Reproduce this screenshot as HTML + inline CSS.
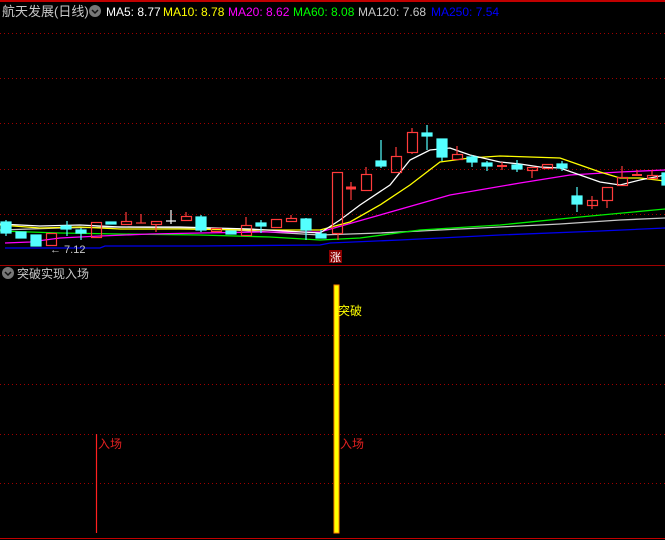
<!DOCTYPE html>
<html><head><meta charset="utf-8"><style>
body{margin:0;background:#000;width:665px;height:540px;overflow:hidden;font-family:"Liberation Sans","Noto Sans CJK SC",sans-serif}
svg{position:absolute;left:0;top:0}
</style></head><body>
<svg width="665" height="540" xmlns="http://www.w3.org/2000/svg" font-family="Liberation Sans, Noto Sans CJK SC, sans-serif">
<rect width="665" height="540" fill="#000"/>
<line x1="0" y1="1" x2="665" y2="1" stroke="#c00000" stroke-width="2"/>
<g stroke="#a00000" stroke-width="1" stroke-dasharray="1,3">
<line x1="0" y1="33.5" x2="665" y2="33.5"/><line x1="0" y1="78.5" x2="665" y2="78.5"/>
<line x1="0" y1="123.5" x2="665" y2="123.5"/><line x1="0" y1="169.5" x2="665" y2="169.5"/>
<line x1="0" y1="214.5" x2="665" y2="214.5"/>
<line x1="0" y1="335.5" x2="665" y2="335.5"/><line x1="0" y1="384.5" x2="665" y2="384.5"/>
<line x1="0" y1="434.5" x2="665" y2="434.5"/><line x1="0" y1="483.5" x2="665" y2="483.5"/>
</g>
<line x1="0" y1="265.5" x2="665" y2="265.5" stroke="#a00000"/>
<line x1="0" y1="538.5" x2="665" y2="538.5" stroke="#c00000"/>
<text x="2" y="16" font-size="13" fill="#c8c8c8">航天发展(日线)</text>
<circle cx="95" cy="11" r="6" fill="#777"/><path d="M92 10 L95 13 L98 10" stroke="#111" stroke-width="1.5" fill="none"/>
<text y="16" font-size="12"><tspan x="106" fill="#fff">MA5: 8.77</tspan><tspan x="163" fill="#ff0">MA10: 8.78</tspan><tspan x="228" fill="#f0f">MA20: 8.62</tspan><tspan x="293" fill="#0f0">MA60: 8.08</tspan><tspan x="358" fill="#c8c8c8">MA120: 7.68</tspan><tspan x="431" fill="#0000ff">MA250: 7.54</tspan></text>
<g fill="none" stroke-width="1.3">
<polyline stroke="#0000ee" points="5,248 100,248 105,246 200,246 320,245 330,243 400,240 500,235 600,231 665,228"/>
<polyline stroke="#c8c8c8" points="0,230 60,228 120,227 200,228 320,235 380,233 440,230 500,227 560,224 620,220 665,218"/>
<polyline stroke="#00ee00" points="0,231 60,233 120,234 200,235 270,237 320,240 360,238 420,230 500,225 580,217 665,209"/>
<polyline stroke="#ff00ff" points="5,243 30,242 60,238 100,236 150,234 200,233 260,232 320,232 380,215 450,195 520,183 570,175 620,172 665,170"/>
<polyline stroke="#ffff00" points="0,225 40,228 80,227 120,229 180,229 250,230 320,230 350,222 380,205 410,185 440,162 470,158 500,156 530,157 560,158 580,165 600,172 620,178 640,178 665,181"/>
<polyline stroke="#ffffff" points="0,224 40,226 80,225 120,227 180,227 250,229 320,233 340,220 360,205 390,185 410,160 430,150 450,148 470,155 500,162 520,164 540,167 560,168 580,175 600,182 620,185 640,180 665,175"/>
</g>
<g stroke-width="1.2">
<g stroke="#54ffff" fill="#54ffff">
<line x1="6" y1="220" x2="6" y2="236"/><rect x="1" y="222" width="10" height="11"/>
<rect x="16" y="232" width="10" height="6"/>
<rect x="31" y="235" width="10" height="11"/>
<line x1="67" y1="221" x2="67" y2="236"/><rect x="61" y="226" width="10" height="3"/>
<line x1="81" y1="228" x2="81" y2="240"/><rect x="76" y="230" width="10" height="3"/>
<rect x="106" y="222" width="10" height="2"/>
<line x1="201" y1="215" x2="201" y2="232"/><rect x="196" y="217" width="10" height="13"/>
<rect x="226" y="231" width="10" height="3"/>
<line x1="261" y1="220" x2="261" y2="233"/><rect x="256" y="223" width="10" height="3"/>
<line x1="306" y1="218" x2="306" y2="240"/><rect x="301" y="219" width="10" height="11"/>
<line x1="321" y1="230" x2="321" y2="238"/><rect x="316" y="234" width="10" height="4"/>
<line x1="381" y1="140" x2="381" y2="168"/><rect x="376" y="161" width="10" height="5"/>
<line x1="427" y1="125" x2="427" y2="150"/><rect x="422" y="133" width="10" height="3"/>
<line x1="442" y1="139" x2="442" y2="161"/><rect x="437" y="139" width="10" height="18"/>
<line x1="472" y1="155" x2="472" y2="167"/><rect x="467" y="157" width="10" height="5"/>
<line x1="487" y1="161" x2="487" y2="171"/><rect x="482" y="163" width="10" height="3"/>
<line x1="517" y1="160" x2="517" y2="172"/><rect x="512" y="165" width="10" height="4"/>
<line x1="562" y1="161" x2="562" y2="171"/><rect x="557" y="164" width="10" height="4"/>
<line x1="577" y1="187" x2="577" y2="212"/><rect x="572" y="196" width="10" height="8"/>
<rect x="662" y="173" width="4" height="12"/>
</g>
<g stroke="#ff3b3b" fill="none">
<rect x="46.5" y="233.5" width="10" height="12"/>
<rect x="91.5" y="222.5" width="10" height="15"/>
<line x1="126" y1="212" x2="126" y2="221"/><rect x="121.5" y="221.5" width="10" height="3"/>
<line x1="141" y1="214" x2="141" y2="223"/><line x1="136" y1="223" x2="146" y2="223"/>
<line x1="156" y1="224" x2="156" y2="232"/><rect x="151.5" y="221.5" width="10" height="3"/>
<line x1="186" y1="212" x2="186" y2="216"/><rect x="181.5" y="216.5" width="10" height="4"/>
<rect x="211.5" y="228.5" width="10" height="3"/>
<line x1="246" y1="217" x2="246" y2="225"/><rect x="241.5" y="225.5" width="10" height="10"/>
<rect x="271.5" y="219.5" width="10" height="8"/>
<line x1="291" y1="215" x2="291" y2="218"/><rect x="286.5" y="218.5" width="10" height="3"/>
<line x1="338" y1="233" x2="338" y2="240"/><rect x="332.5" y="172.5" width="10" height="61"/>
<line x1="351" y1="182" x2="351" y2="200"/><line x1="346" y1="188" x2="356" y2="188" stroke-width="3"/>
<line x1="366" y1="167" x2="366" y2="174"/><rect x="361.5" y="174.5" width="10" height="16"/>
<line x1="396" y1="147" x2="396" y2="156"/><rect x="391.5" y="156.5" width="10" height="16"/>
<line x1="412" y1="128" x2="412" y2="132"/><line x1="412" y1="152" x2="412" y2="154"/><rect x="407.5" y="132.5" width="10" height="20"/>
<line x1="457" y1="146" x2="457" y2="154"/><rect x="452.5" y="154.5" width="10" height="5"/>
<line x1="502" y1="162" x2="502" y2="170"/><line x1="497" y1="166" x2="507" y2="166" stroke-width="2"/>
<line x1="532" y1="170" x2="532" y2="178"/><rect x="527.5" y="167.5" width="10" height="3"/>
<rect x="542.5" y="164.5" width="10" height="4"/>
<line x1="592" y1="196" x2="592" y2="209"/><rect x="587.5" y="200.5" width="10" height="5"/>
<line x1="607" y1="200" x2="607" y2="208"/><rect x="602.5" y="187.5" width="10" height="13"/>
<line x1="622" y1="166" x2="622" y2="177"/><rect x="617.5" y="177.5" width="10" height="8"/>
<line x1="637" y1="170" x2="637" y2="176"/><line x1="632" y1="175" x2="642" y2="175" stroke-width="2"/>
<line x1="652" y1="170" x2="652" y2="175"/><rect x="647.5" y="175.5" width="10" height="3"/>
</g>
<g stroke="#fff"><line x1="171" y1="210" x2="171" y2="224"/><line x1="166" y1="221" x2="176" y2="221"/></g>
</g>
<text x="50" y="253" font-size="11" fill="#c8c8c8">← 7.12</text>
<rect x="329" y="250" width="13" height="13" fill="#8b0000"/>
<text x="330" y="261" font-size="11" fill="#fff">涨</text>
<circle cx="8" cy="273" r="6" fill="#777"/><path d="M5 272 L8 275 L11 272" stroke="#111" stroke-width="1.5" fill="none"/>
<text x="17" y="278" font-size="12" fill="#c8c8c8">突破实现入场</text>
<line x1="96.5" y1="434" x2="96.5" y2="533" stroke="#ff2020" stroke-width="1.2"/>
<text x="98" y="448" font-size="12" fill="#e02020">入场</text>
<rect x="334" y="285" width="5" height="248" fill="#ffff00" stroke="#ff8000" stroke-width="1"/>
<text x="338" y="315" font-size="12" fill="#ffff00">突破</text>
<text x="340" y="448" font-size="12" fill="#e02020">入场</text>
</svg>
</body></html>
